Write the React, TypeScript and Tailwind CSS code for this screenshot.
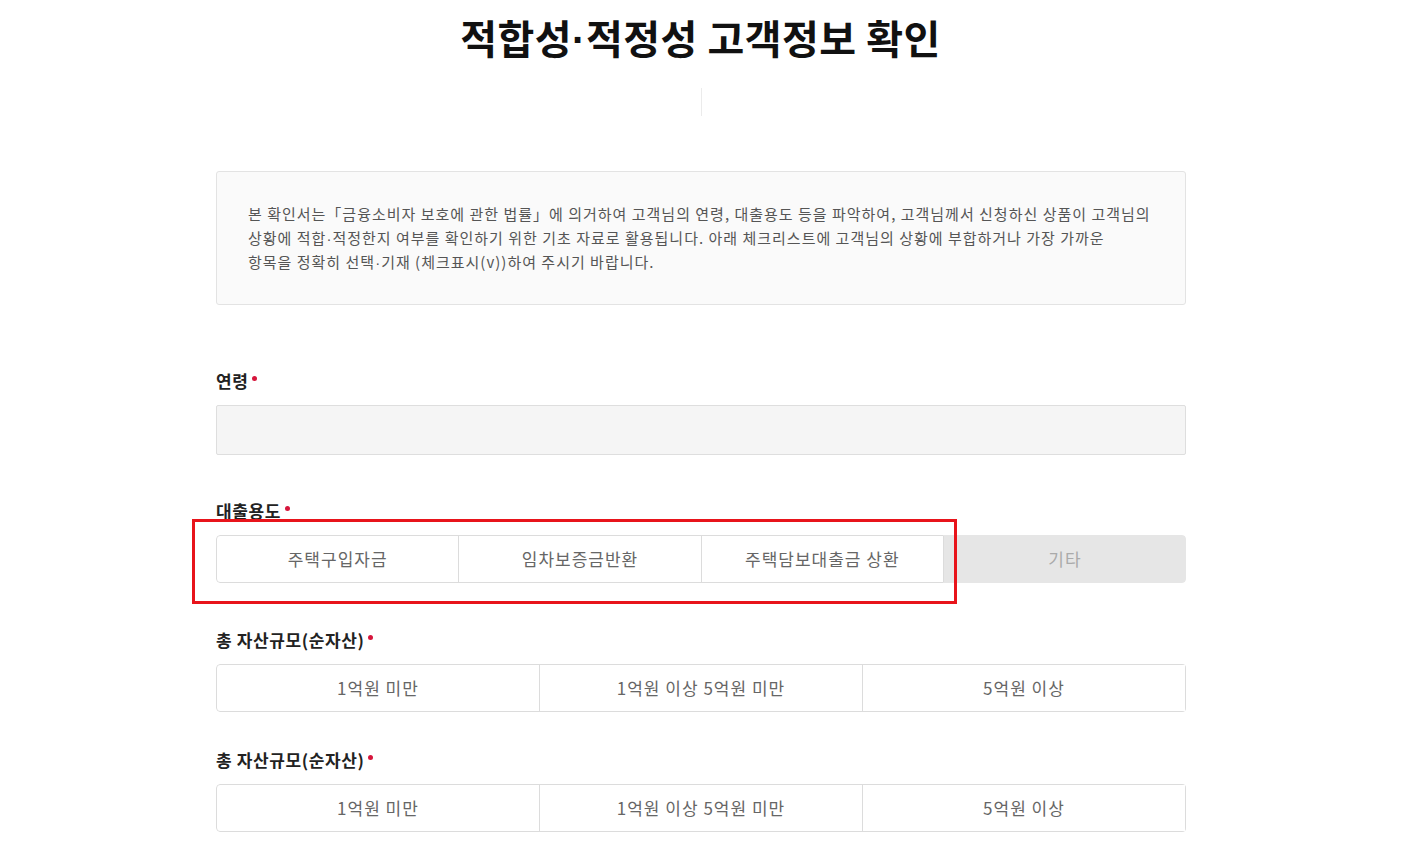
import React from 'react';

const font = { fontFamily: '"Noto Sans CJK KR", "Noto Sans", sans-serif' };

// 가운뎃점은 라틴 폰트로 (CJK 폰트는 전각으로 넓게 찍힘)
const Dot = () => (
  <span className="leading-[0]" style={{ fontFamily: '"Liberation Sans", sans-serif' }}>
    ·
  </span>
);

const Label: React.FC<{ text: string; className?: string }> = ({ text, className }) => (
  <div className={`flex items-start text-[17px] leading-[24px] font-bold text-[#222] tracking-[0.6px] ${className ?? ''}`}>
    <span>{text}</span>
    <span className="ml-[4px] mt-[7px] block w-[5px] h-[5px] rounded-full bg-[#d6163c]" />
  </div>
);

const Options: React.FC<{ items: string[]; disabledLast?: string }> = ({ items, disabledLast }) => (
  <div className="flex h-[48px] rounded-[4px] overflow-hidden">
    <div className="flex flex-1 border border-[#dcdcdc] rounded-l-[4px] bg-white" style={disabledLast ? { flex: 3 } : undefined}>
      {items.map((t, i) => (
        <div
          key={t}
          className={`flex-1 flex items-center justify-center text-[17px] tracking-[1px] text-[#666] ${i > 0 ? 'border-l border-[#dcdcdc]' : ''}`}
        >
          {t}
        </div>
      ))}
    </div>
    {disabledLast && (
      <div className="flex-1 flex items-center justify-center bg-[#e6e6e6] text-[17px] tracking-[1px] text-[#aaa] rounded-r-[4px]">
        {disabledLast}
      </div>
    )}
  </div>
);

export default function App() {
  return (
    <div className="min-h-[849px] bg-white pb-[20px]" style={font}>
      <h1 className="pt-[13px] h-[61px] text-center text-[40px] leading-[48px] font-bold text-[#111] tracking-[0.5px] pr-[10px]">
        적합성<Dot />적정성 고객정보 확인
      </h1>
      <div className="mx-auto mt-[27px] h-[28px] w-px bg-[#ebebeb] -translate-x-[4px]" />

      <div className="relative ml-[216px] w-[970px]">
        <div className="mt-[55px] border border-[#e3e3e3] rounded-[3px] bg-[#fafafa] px-[31px] py-[30px] text-[15px] tracking-[1px] leading-[24px] text-[#555] whitespace-nowrap">
          <div className="h-[24px]">
            본 확인서는「금융소비자 보호에 관한 법률」에 의거하여 고객님의 연령, 대출용도 등을 파악하여, 고객님께서 신청하신 상품이 고객님의
          </div>
          <div className="h-[24px]">
            상황에 적합<Dot />적정한지 여부를 확인하기 위한 기초 자료로 활용됩니다. 아래 체크리스트에 고객님의 상황에 부합하거나 가장 가까운
          </div>
          <div className="h-[24px]">
            항목을 정확히 선택<Dot />기재 (체크표시(v))하여 주시기 바랍니다.
          </div>
        </div>

        <Label text="연령" className="mt-[64px]" />
        <div className="mt-[12px] h-[50px] border border-[#dedede] rounded-[2px] bg-[#f5f5f5]" />

        <Label text="대출용도" className="mt-[44px]" />
        <div className="mt-[12px]">
          <Options items={['주택구입자금', '임차보증금반환', '주택담보대출금 상환']} disabledLast="기타" />
        </div>

        <Label text="총 자산규모(순자산)" className="mt-[45px]" />
        <div className="mt-[12px]">
          <Options items={['1억원 미만', '1억원 이상 5억원 미만', '5억원 이상']} />
        </div>

        <Label text="총 자산규모(순자산)" className="mt-[36px]" />
        <div className="mt-[12px]">
          <Options items={['1억원 미만', '1억원 이상 5억원 미만', '5억원 이상']} />
        </div>

        {/* annotation box */}
        <div className="absolute left-[-24px] top-[348px] w-[765px] h-[85px] border-[3px] border-[#e8141b] pointer-events-none" />
      </div>
    </div>
  );
}
